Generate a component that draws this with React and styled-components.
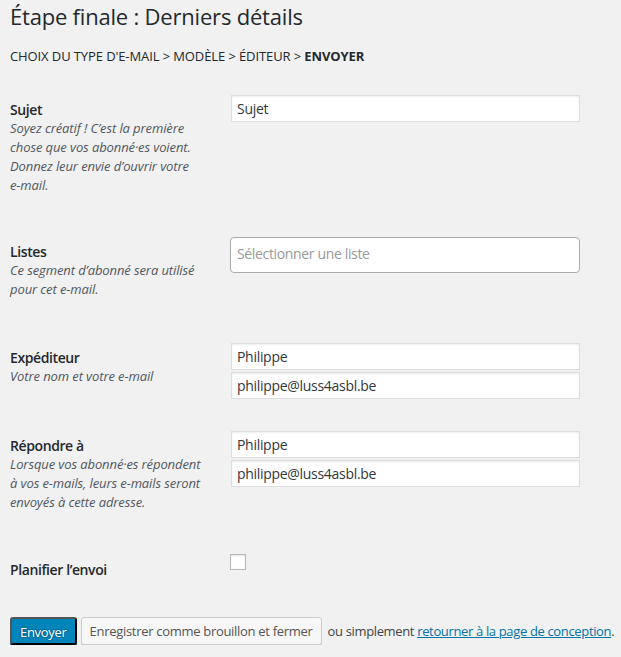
import React, { useState } from "react";
import styled, { createGlobalStyle } from "styled-components";

const GlobalStyle = createGlobalStyle`
  html, body {
    margin: 0;
    padding: 0;
    background: #f1f1f1;
  }
  body {
    font-family: "Open Sans", "Noto Sans", sans-serif;
    color: #23282d;
    font-size: 13px;
  }
`;

function App() {
  const [schedule, setSchedule] = useState(false);

  return (
    <Wrap>
      <GlobalStyle />
      <Title>Étape finale : Derniers détails</Title>
      <Breadcrumb>
        Choix du type d'e-mail &gt; Modèle &gt; Éditeur &gt; <b>Envoyer</b>
      </Breadcrumb>

      <FormTable>
        <Row>
          <Th $bottom={27}>
            <Label>Sujet</Label>
            <Description>
              Soyez créatif ! C’est la première chose que vos abonné·es voient. Donnez leur envie d’ouvrir votre{" "}
              <NoWrap>e-mail.</NoWrap>
            </Description>
          </Th>
          <Td>
            <TextInput defaultValue="Sujet" />
          </Td>
        </Row>

        <Row>
          <Th $bottom={29}>
            <Label>Listes</Label>
            <Description>
              Ce segment d’abonné sera utilisé pour cet <NoWrap>e-mail.</NoWrap>
            </Description>
          </Th>
          <Td>
            <SelectBox>Sélectionner une liste</SelectBox>
          </Td>
        </Row>

        <Row>
          <Th $bottom={27}>
            <Label>Expéditeur</Label>
            <Description>Votre nom et votre e-mail</Description>
          </Th>
          <Td>
            <Stack>
              <TextInput defaultValue="Philippe" />
              <TextInput defaultValue="philippe@luss4asbl.be" />
            </Stack>
          </Td>
        </Row>

        <Row>
          <Th $bottom={28}>
            <Label>Répondre à</Label>
            <Description>
              Lorsque vos abonné·es répondent à vos <NoWrap>e-mails,</NoWrap> leurs <NoWrap>e-mails</NoWrap> seront
              envoyés à cette adresse.
            </Description>
          </Th>
          <Td>
            <Stack>
              <TextInput defaultValue="Philippe" />
              <TextInput defaultValue="philippe@luss4asbl.be" />
            </Stack>
          </Td>
        </Row>

        <Row>
          <Th $bottom={27}>
            <Label>Planifier l’envoi</Label>
          </Th>
          <Td>
            <Checkbox type="checkbox" checked={schedule} onChange={() => setSchedule(!schedule)} />
          </Td>
        </Row>
      </FormTable>

      <Submit>
        <Button $primary>Envoyer</Button>
        <Button>Enregistrer comme brouillon et fermer</Button>
        <Trailer>
          ou simplement <Link href="#">retourner à la page de conception</Link>.
        </Trailer>
      </Submit>
    </Wrap>
  );
}

const Wrap = styled.div`
  padding: 2px 10px 0;
`;

const Title = styled.h1`
  margin: 0;
  font-size: 22px;
  font-weight: 400;
  line-height: 29px;
  letter-spacing: -0.2px;
  color: #23282d;
`;

const Breadcrumb = styled.p`
  margin: 16px 0 0;
  font-size: 13px;
  line-height: 18px;
  letter-spacing: -0.1px;
  text-transform: uppercase;
  color: #23282d;

  b {
    font-weight: 700;
  }
`;

const FormTable = styled.div`
  margin-top: 15px;
`;

const Row = styled.div`
  display: flex;
  align-items: flex-start;
`;

const Th = styled.div`
  width: 210px;
  flex: none;
  box-sizing: border-box;
  padding: 20px 10px ${(p) => p.$bottom}px 0;
`;

const Label = styled.div`
  font-size: 14px;
  font-weight: 600;
  line-height: 19px;
  letter-spacing: -0.4px;
  color: #23282d;
`;

const Description = styled.div`
  font-size: 13px;
  font-style: italic;
  font-weight: 400;
  line-height: 19px;
  letter-spacing: -0.1px;
  color: #50575e;
`;

const NoWrap = styled.span`
  white-space: nowrap;
`;

const Td = styled.div`
  padding: 15px 10px 17px;
`;

const Stack = styled.div`
  display: flex;
  flex-direction: column;
  gap: 2px;
`;

const TextInput = styled.input`
  box-sizing: border-box;
  width: 349px;
  height: 27px;
  margin: 0 1px;
  padding: 0 5px;
  border: 1px solid #ddd;
  background: #fff;
  box-shadow: inset 0 1px 2px rgba(0, 0, 0, 0.07);
  font-family: "Open Sans", "Noto Sans", sans-serif;
  font-size: 14px;
  letter-spacing: -0.3px;
  color: #32373c;
  outline: none;
`;

const SelectBox = styled.div`
  box-sizing: border-box;
  width: 350px;
  height: 36px;
  padding: 0 6px 4px;
  display: flex;
  align-items: center;
  border: 1px solid #aaa;
  border-radius: 4px;
  background: #fff;
  font-size: 14px;
  letter-spacing: -0.35px;
  color: #999;
`;

const Checkbox = styled.input`
  appearance: none;
  box-sizing: border-box;
  width: 16px;
  height: 16px;
  margin: -1px 0 0;
  border: 1px solid #b4b9be;
  background: #fff;
  box-shadow: inset 0 1px 2px rgba(0, 0, 0, 0.1);
  display: block;
`;

const Submit = styled.div`
  margin-top: 11px;
  display: flex;
  align-items: center;
  gap: 4px;
  font-size: 13px;
  color: #444;
`;

const Button = styled.button`
  flex: none;
  box-sizing: border-box;
  height: 28px;
  padding: 0 8px 2px;
  border-radius: 3px;
  font-family: "Open Sans", "Noto Sans", sans-serif;
  font-size: 13px;
  line-height: 26px;
  letter-spacing: -0.3px;
  white-space: nowrap;
  cursor: pointer;
  border: 1px solid ${(p) => (p.$primary ? "#0073aa #006799 #006799" : "#ccc")};
  background: ${(p) => (p.$primary ? "#0085ba" : "#f7f7f7")};
  color: ${(p) => (p.$primary ? "#fff" : "#555")};
  box-shadow: ${(p) => (p.$primary ? "0 1px 0 #006799" : "0 1px 0 #ccc")};
  text-shadow: ${(p) =>
    p.$primary ? "0 -1px 1px #006799, 1px 0 1px #006799, 0 1px 1px #006799, -1px 0 1px #006799" : "none"};
  margin-right: ${(p) => (p.$primary ? "0" : "2px")};
`;

const Trailer = styled.span`
  white-space: nowrap;
  letter-spacing: -0.35px;
`;

const Link = styled.a`
  color: #0073aa;
  text-decoration: underline;
`;

export default App;
